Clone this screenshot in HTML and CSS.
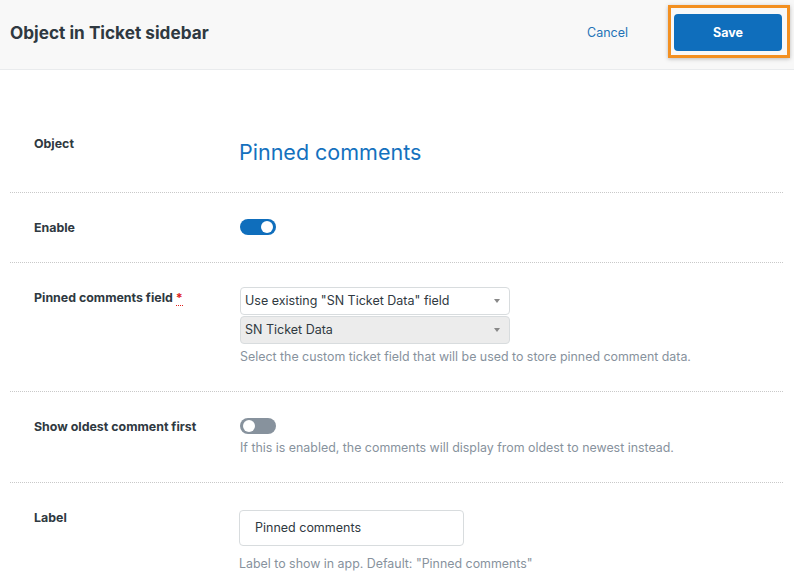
FILE: index.html
```html
<!DOCTYPE html>
<html>
<head>
<meta charset="utf-8">
<link rel="stylesheet" href="styles.css">
</head>
<body>
<header class="topbar">
  <h1 class="title">Object in Ticket sidebar</h1>
  <div class="actions">
    <a class="cancel">Cancel</a>
    <div class="highlight"><button class="save">Save</button></div>
  </div>
</header>
<main class="form">
  <div class="row">
    <div class="label">Object</div>
    <div class="control"><div class="object-name">Pinned comments</div></div>
  </div>
  <div class="row">
    <div class="label">Enable</div>
    <div class="control"><span class="toggle on"><span class="knob"></span></span></div>
  </div>
  <div class="row">
    <div class="label">Pinned comments field <span class="req">*</span></div>
    <div class="control">
      <div class="select">Use existing "SN Ticket Data" field<span class="caret"></span></div>
      <div class="select disabled">SN Ticket Data<span class="caret"></span></div>
      <div class="hint hint-select">Select the custom ticket field that will be used to store pinned comment data.</div>
    </div>
  </div>
  <div class="row">
    <div class="label">Show oldest comment first</div>
    <div class="control">
      <span class="toggle off"><span class="knob"></span></span>
      <div class="hint">If this is enabled, the comments will display from oldest to newest instead.</div>
    </div>
  </div>
  <div class="row">
    <div class="label">Label</div>
    <div class="control">
      <div class="input">Pinned comments</div>
      <div class="hint hint-gap">Label to show in app. Default: "Pinned comments"</div>
    </div>
  </div>
</main>
</body>
</html>
```
FILE: styles.css
```css
* { box-sizing: border-box; }
html, body { margin: 0; padding: 0; background: #fff; }
body {
  font-family: Inter, "Open Sans", "Liberation Sans", sans-serif;
  color: #2f3941;
  width: 794px;
  height: 581px;
  overflow: hidden;
}
.topbar {
  height: 70px;
  background: #f8f8f8;
  border-bottom: 1px solid #e9ebed;
  display: flex;
  align-items: center;
  justify-content: space-between;
  padding: 0 4px 4px 10px;
}
.title {
  margin: 0;
  font-size: 17.2px;
  line-height: 22px;
  font-weight: 700;
  color: #2f3941;
}
.actions {
  display: flex;
  align-items: center;
}
.cancel {
  font-size: 12.5px;
  line-height: 16px;
  color: #1f73b7;
  margin-right: 40px;
}
.highlight {
  border: 3px solid #f39021;
  padding: 6px 5px 4px 3px;
  box-shadow: 0 1px 4px rgba(0,0,0,0.25);
  margin-bottom: 3px;
}
.save {
  display: block;
  width: 108px;
  height: 37px;
  border: none;
  border-radius: 4px;
  background: #0f6ebc;
  color: #fff;
  font-family: inherit;
  font-size: 12.5px;
  font-weight: 700;
}
.form {
  padding: 39px 11px 0 10px;
}
.row {
  display: flex;
  padding: 27px 0 27px 24px;
  border-bottom: 1px dotted #c9c9c9;
}
.row:last-child { border-bottom: none; }
.label {
  width: 205px;
  flex: none;
  font-size: 12.4px;
  font-weight: 700;
  line-height: 15px;
  color: #2f3941;
}
.req {
  color: #e0201b;
  border-bottom: 1px dotted #e0201b;
}
.control {
  flex: 1;
  display: flex;
  flex-direction: column;
  align-items: flex-start;
}
.object-name {
  font-size: 21.5px;
  line-height: 24px;
  margin-top: 4px;
  margin-bottom: 1px;
  color: #1471be;
}
.toggle {
  display: block;
  width: 36px;
  height: 16px;
  border-radius: 8px;
  position: relative;
  margin-left: 1px;
  margin-top: -1px;
}
.toggle.on { background: #0f6ebc; }
.toggle.off { background: #87929d; }
.knob {
  position: absolute;
  top: 2px;
  width: 12px;
  height: 12px;
  border-radius: 50%;
  background: #fff;
}
.toggle.on .knob { right: 3px; }
.toggle.off .knob { left: 3px; }
.select {
  position: relative;
  width: 270px;
  height: 28px;
  margin-left: 1px;
  margin-top: -3px;
  border: 1px solid #d8dcde;
  border-radius: 4px;
  background: #fff;
  font-size: 12.5px;
  line-height: 26px;
  padding-left: 4px;
  color: #2f3941;
}
.select.disabled {
  background: #ececec;
  margin-top: 1px;
}
.caret {
  position: absolute;
  right: 9px;
  top: 11px;
  width: 0;
  height: 0;
  border-left: 3px solid transparent;
  border-right: 3px solid transparent;
  border-top: 4px solid #888;
}
.hint {
  font-size: 12.4px;
  line-height: 15px;
  color: #87929d;
  margin-top: 6px;
  margin-left: 1px;
}
.hint-select { margin-top: 5px; }
.input {
  width: 225px;
  height: 36px;
  border: 1px solid #d8dcde;
  border-radius: 4px;
  font-size: 12.5px;
  line-height: 34px;
  padding-left: 15px;
  color: #2f3941;
}
.hint-gap { margin-top: 10px; margin-left: 0; }
```
